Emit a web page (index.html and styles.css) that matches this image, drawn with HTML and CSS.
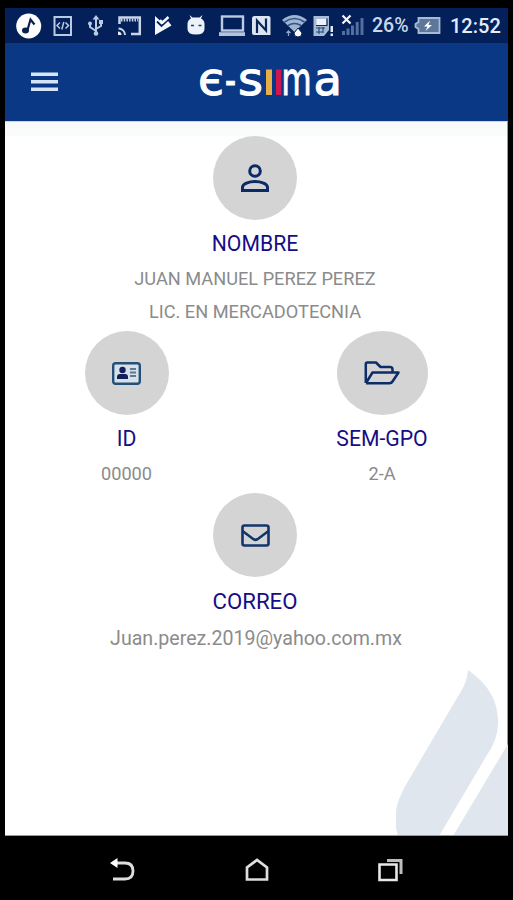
FILE: index.html
```html
<!DOCTYPE html>
<html lang="es">
<head>
<meta charset="utf-8">
<title>E-SIIMA</title>
<link rel="stylesheet" href="styles.css">
</head>
<body>
<div class="phone">
  <div class="status">
    <svg class="status-icons" width="355" height="35" viewBox="13 8 355 35" fill="#e4ebf5">
      <circle cx="28.700" cy="26" r="12.500" fill="#fff"/>
      <ellipse cx="25.500" cy="30.500" rx="3.500" ry="3" fill="#0a2150"/>
      <path d="M27.500 30l3-10.500 4 5" fill="none" stroke="#0a2150" stroke-width="2.200"/>
      <g fill="none" stroke="#b9cae2" stroke-width="2">
        <rect x="54.500" y="17" width="16.500" height="18"/>
        <path d="M60 22.500l-3 3 3 3M65.500 22.500l3 3-3 3M63.800 22l-2 7.500" stroke-width="1.500"/>
      </g>
      <g fill="none" stroke="#b9cae2" stroke-width="2">
        <path d="M96 34V18M96 31l-6-4v-4M96 29l5-3v-4"/>
      </g>
      <path d="M96 15l3.500 4.500h-7zM99 20h4v4h-4z" fill="#b9cae2"/><circle cx="90" cy="23.500" r="2" fill="#b9cae2"/><circle cx="96" cy="33.500" r="2.300" fill="#b9cae2"/>
      <g fill="none" stroke="#c9d5e7" stroke-width="2.500">
        <path d="M119.500 24v-6.500h20.300V34H131"/>
        <path d="M121 20h17" stroke-width="3" stroke-dasharray="1.500 1.200"/>
        <path d="M118.500 28.500a6.500 6.500 0 0 1 6.500 6.500" stroke-width="2"/>
      </g>
      <path d="M118 31.500a3.500 3.500 0 0 1 3.500 3.500H118z"/>
      <path d="M155 16l6.500 6 5-3 5 6.500-16.500 9.500z" fill="#f4f7fb"/>
      <path d="M157 21.500l4.500 4.500L169.500 18.500" fill="none" stroke="#082458" stroke-width="1.800"/>
      <path d="M160 20l2.500 2.500 6-5.500" fill="none" stroke="#f4f7fb" stroke-width="2.400"/>
      <path d="M187.500 24q0-4 3.500-5.500L189.500 15l3 2.500h7l3-2.500-1.500 3.500q3.500 1.500 3.500 5.500v5q0 5.500-8.500 5.500T187.500 29z" fill="#edf2fa"/>
      <path d="M191 25.500h3M198.500 25.500h3" stroke="#193b70" stroke-width="1.700"/>
      <rect x="222" y="16.500" width="21" height="14" fill="none" stroke="#bccbe1" stroke-width="2.400"/>
      <path d="M219 32.200h26v3.800h-26z" fill="#b3c3dc"/>
      <path d="M254.500 16h14q2 0 2 2v17h-16.500q-2 0-2-2V18.500q0-2.500 2.500-2.500z" fill="#dbe4f0"/>
      <path d="M257 33V20.500l9 10V18.500" fill="none" stroke="#082458" stroke-width="2.200"/>
      <path d="M282 20q12.500-10 25 0l-12.500 12z" fill="#9fb4d2"/>
      <path d="M284.500 22q10-7 20 0M288 25.500q6.500-4 13 0" fill="none" stroke="#315483" stroke-width="1.600"/>
      <path d="M298 28l4 5q0 4-4 4t-4-4z" fill="#fff" stroke="#082458"/><path d="M288.500 36v-5M286.500 33l2-2 2 2" stroke="#8ca6ca" stroke-width="1.300" fill="none"/>
      <path d="M313.500 16h15.500v14l-5 6h-10.500z" fill="#a7bad6"/><path d="M316.500 19h10v6h-10z" fill="#eef3fb"/>
      <path d="M316 28h9M316 32h7M319 27v7M323 27v6" stroke="#2a4c7c" stroke-width="1.200"/>
      <path d="M316 25.500h11V18.500" fill="none" stroke="#0d2a5d" stroke-width="1.200"/>
      <path d="M330.500 26h2.500v6h-2.500zM330.500 33.500h2.500v2.500h-2.500z"/>
      <path d="M342.500 15.500l8 8M350.500 15.500l-8 8" stroke="#f4f7fb" stroke-width="2.200"/>
      <path d="M342 31h3v4h-3zM346.500 28.500h3v6.500h-3zM351 25.500h3V35h-3zM355.700 22h3v13h-3zM360.500 18h3v17h-3z" fill="#536f9f"/>
    </svg>
    <span class="percent">26%</span>
    <svg class="battery" width="30" height="20" viewBox="0 0 30 20">
      <path d="M5.500 2H26.500V17H5.500V13L2.500 11V8L5.500 6z" fill="#5d769b" stroke="#a9bbd2" stroke-width="1.800"/>
      <path d="M17 4.500l-6 6h3.500l-2 4.500 6.500-6h-3.500z" fill="#fff"/>
    </svg>
    <span class="clock">12:52</span>
  </div>
  <header class="bar">
    <svg width="27" height="20" viewBox="0 0 27 20" fill="#d5e4f8"><path d="M0 .5h27v3.500H0zM0 8h27v3.500H0zM0 15.500h27v3.500H0z"/></svg>
    <svg class="logo" width="146" height="74" viewBox="197 45 146 74">
      <g class="logo-text">
        <text x="198" y="94.500" textLength="26" lengthAdjust="spacingAndGlyphs">є</text>
        <text x="225" y="95.500" textLength="11" lengthAdjust="spacingAndGlyphs">-</text>
        <text x="238" y="94.500" textLength="25" lengthAdjust="spacingAndGlyphs">s</text>
        <text x="281.500" y="94.500" textLength="30" lengthAdjust="spacingAndGlyphs">m</text>
        <text x="313.500" y="94.500" textLength="28.500" lengthAdjust="spacingAndGlyphs">a</text>
      </g>
      <path d="M266 69.500h6v25.500h-6z" fill="#e9ad48"/>
      <path d="M276 69.500h5.300v25.500h-5.300z" fill="#cf1650"/>
    </svg>
  </header>
  <main class="content">
    <svg class="watermark" width="112" height="167" viewBox="0 0 112 167" fill="#dfe6ed">
      <path d="M72 2C71 13 68 19 61 30L11 115Q1 132 0 144V160L2 168H43L91 87Q103 70 102 51C101 29 90 15 72 2z"/>
      <path d="M112 76V168H57z"/>
    </svg>
    <section class="item nombre">
      <div class="disc"><svg width="28" height="28" viewBox="0 0 28 28" fill="none" stroke="#0b2a66" stroke-width="3"><circle cx="14" cy="7" r="5.300"/><path d="M1.500 26.500v-3.300C1.500 19.700 8 17.500 14 17.500s12.500 2.200 12.500 5.700v3.300z"/></svg></div>
      <h2>NOMBRE</h2>
      <p>JUAN MANUEL PEREZ PEREZ</p>
      <p>LIC. EN MERCADOTECNIA</p>
    </section>
    <div class="pair">
      <section class="item">
        <div class="disc"><svg width="29" height="23" viewBox="0 0 29 23"><rect x="1.200" y="1.200" width="26.600" height="20.600" rx="2.500" fill="#d7dfe7" stroke="#235078" stroke-width="2.400"/><circle cx="10.500" cy="8" r="3.200" fill="#10205c"/><path d="M5 17v-2q0-3 3-3h5q3 0 3 3v2z" fill="#10205c"/><path d="M18 7h6M18 10.500h6M18 14h6" stroke="#5e7898" stroke-width="1.800"/></svg></div>
        <h2>ID</h2>
        <p>00000</p>
      </section>
      <section class="item">
        <div class="disc wide"><svg width="36" height="24" viewBox="0 0 36 24" fill="none" stroke="#0c2d68" stroke-width="2.500" stroke-linejoin="round"><path d="M1.800 22V3Q1.800 1.500 3.300 1.500H12L16.500 6H26Q28.500 6 28.500 8.500V11.500M2 22L8.500 11.500H34.500L28.500 20.500Q27.500 22.200 25.500 22.200H2"/></svg></div>
        <h2>SEM-GPO</h2>
        <p>2-A</p>
      </section>
    </div>
    <section class="item correo">
      <div class="disc"><svg width="29" height="23" viewBox="0 0 29 23" fill="none" stroke="#12356a" stroke-width="2.600"><rect x="1.500" y="1.500" width="26" height="20" rx="2"/><path d="M1.500 7L12.500 15.200Q14.500 16.500 16.500 15.200L27.500 7"/></svg></div>
      <h2>CORREO</h2>
      <p class="mail">Juan.perez.2019@yahoo.com.mx</p>
    </section>
  </main>
  <nav class="nav">
    <svg width="25" height="24" viewBox="0 0 25 24"><path d="M6 5h9q8 0 8 8t-8 8H3" fill="none" stroke="#dedede" stroke-width="2.800"/><path d="M0 5L7.500 0v10z" fill="#fff"/></svg>
    <svg width="24" height="24" viewBox="0 0 24 24"><path d="M2 21.500V9.500L12 2l10 7.500v12z" fill="none" stroke="#dedede" stroke-width="2.700"/></svg>
    <svg width="25" height="24" viewBox="0 0 25 24" fill="none"><path d="M9 2.500H23V16" stroke="#bdbdbd" stroke-width="3"/><path d="M1.500 6.500h17v15.500h-17z" stroke="#e8e8e8" stroke-width="2.600"/></svg>
  </nav>
</div>
</body>
</html>
```
FILE: styles.css
```css
* { box-sizing: border-box; }
body { margin: 0; background: #000; font-family: Roboto, sans-serif; }
.phone { width: 513px; height: 900px; padding: 8px 5px 0; display: flex; flex-direction: column; }
.status { height: 35px; background: #03205a; display: flex; align-items: center; padding-left: 8px; color: #c9d8ea; font-weight: 500; white-space: nowrap; }
.status-icons { flex: none; }
.percent { width: 43px; padding-left: 4px; font-size: 19.500px; }
.battery { margin: 0 7px 0 2px; }
.clock { font-size: 20px; color: #e3ecf7; }
.bar { height: 78px; background: #0a3885; display: flex; align-items: center; padding-left: 26px; }
.logo { margin-left: 139px; }
.logo-text { font-family: "DejaVu Sans", sans-serif; font-size: 46px; fill: #fff; stroke: #fff; stroke-width: 1.1px; }
.content { position: relative; height: 715px; background: linear-gradient(#f9fbfb 13px, #fff 15px); border-top: 1px solid #ccd4e3; border-right: 1px solid #999; border-bottom: 1px solid #999; padding-top: 14px; }
.watermark { position: absolute; right: -1px; bottom: 0; }
.item { position: relative; display: flex; flex-direction: column; align-items: center; }
.nombre, .correo { width: 500px; }
.disc { width: 84px; height: 84px; border-radius: 50%; background: #d4d4d4; display: flex; align-items: center; justify-content: center; }
.disc.wide { width: 91px; }
h2 { margin: 9px 0 4px; font-size: 21.2px; font-weight: 400; line-height: 29px; color: #150d85; }
p { margin: 0; font-size: 18.2px; line-height: 33px; color: #8b8b8b; white-space: nowrap; }
.pair { display: grid; grid-template-columns: 243px 252px; gap: 8px; width: 503px; margin-top: 3px; }
.correo { margin-top: 3px; }
.correo h2 { margin-top: 10px; font-size: 22.2px; }
.correo .mail { font-size: 19.6px; line-height: 38px; padding-left: 2px; }
.nav { height: 56px; margin: 6px 0 0; display: flex; align-items: center; justify-content: space-between; padding: 0 105px; }
```
